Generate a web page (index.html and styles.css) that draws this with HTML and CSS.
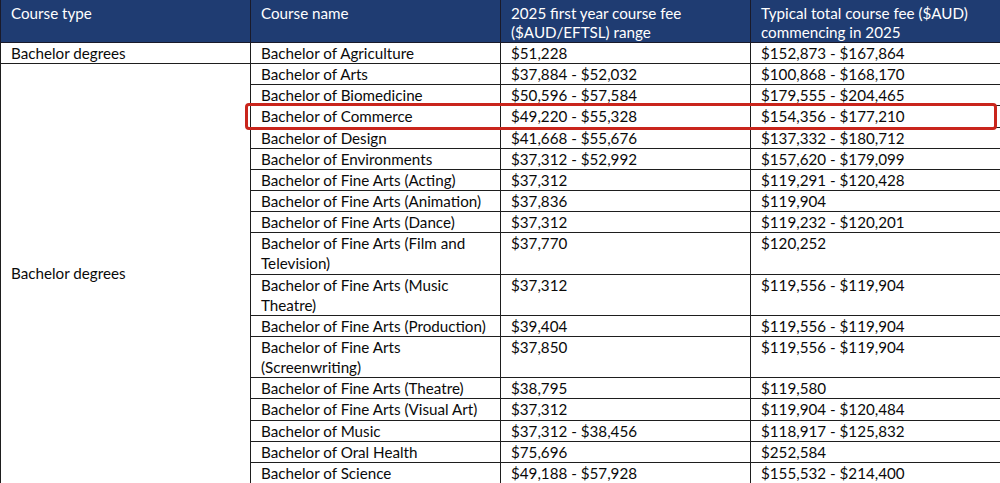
FILE: index.html
```html
<!DOCTYPE html>
<html lang="en">
<head>
<meta charset="utf-8">
<title>Course fees</title>
<link rel="stylesheet" href="styles.css">
</head>
<body>
<div class="wrap">
  <table class="fees">
    <colgroup>
      <col class="c"><col class="c"><col class="c"><col class="c">
    </colgroup>
    <thead>
      <tr>
        <th>Course type</th>
        <th>Course name</th>
        <th>2025 first year course fee<br>($AUD/EFTSL) range</th>
        <th>Typical total course fee ($AUD)<br>commencing in 2025</th>
      </tr>
    </thead>
    <tbody>
      <tr><td>Bachelor degrees</td><td>Bachelor of Agriculture</td><td>$51,228</td><td>$152,873 - $167,864</td></tr>
      <tr><td class="type" rowspan="17">Bachelor degrees</td><td>Bachelor of Arts</td><td>$37,884 - $52,032</td><td>$100,868 - $168,170</td></tr>
      <tr><td>Bachelor of Biomedicine</td><td>$50,596 - $57,584</td><td>$179,555 - $204,465</td></tr>
      <tr><td>Bachelor of Commerce</td><td>$49,220 - $55,328</td><td>$154,356 - $177,210</td></tr>
      <tr><td>Bachelor of Design</td><td>$41,668 - $55,676</td><td>$137,332 - $180,712</td></tr>
      <tr><td>Bachelor of Environments</td><td>$37,312 - $52,992</td><td>$157,620 - $179,099</td></tr>
      <tr><td>Bachelor of Fine Arts (Acting)</td><td>$37,312</td><td>$119,291 - $120,428</td></tr>
      <tr><td>Bachelor of Fine Arts (Animation)</td><td>$37,836</td><td>$119,904</td></tr>
      <tr><td>Bachelor of Fine Arts (Dance)</td><td>$37,312</td><td>$119,232 - $120,201</td></tr>
      <tr><td>Bachelor of Fine Arts (Film and<br>Television)</td><td>$37,770</td><td>$120,252</td></tr>
      <tr><td>Bachelor of Fine Arts (Music<br>Theatre)</td><td>$37,312</td><td>$119,556 - $119,904</td></tr>
      <tr><td>Bachelor of Fine Arts (Production)</td><td>$39,404</td><td>$119,556 - $119,904</td></tr>
      <tr><td>Bachelor of Fine Arts<br>(Screenwriting)</td><td>$37,850</td><td>$119,556 - $119,904</td></tr>
      <tr><td>Bachelor of Fine Arts (Theatre)</td><td>$38,795</td><td>$119,580</td></tr>
      <tr><td>Bachelor of Fine Arts (Visual Art)</td><td>$37,312</td><td>$119,904 - $120,484</td></tr>
      <tr><td>Bachelor of Music</td><td>$37,312 - $38,456</td><td>$118,917 - $125,832</td></tr>
      <tr><td>Bachelor of Oral Health</td><td>$75,696</td><td>$252,584</td></tr>
      <tr><td>Bachelor of Science</td><td>$49,188 - $57,928</td><td>$155,532 - $214,400</td></tr>
    </tbody>
  </table>
  <div class="highlight"></div>
</div>
</body>
</html>
```

FILE: styles.css
```css
html, body {
  margin: 0;
  padding: 0;
  background: #ffffff;
  overflow: hidden;
}

.wrap {
  position: relative;
  width: 1010px;
}

.fees {
  border-collapse: collapse;
  table-layout: fixed;
  width: 1001px;
  font-family: Lato, "Open Sans", sans-serif;
  font-size: 15.2px;
  color: #0a0a0a;
}

.fees .c {
  width: 250px;
}

.fees th {
  background: #1f3c72;
  color: #ffffff;
  font-weight: normal;
  text-align: left;
  vertical-align: top;
  line-height: 19px;
  height: 38px;
  padding: 4px 10px 0 10px;
  border: 1px solid #1a1a2a;
  border-top: none;
}

.fees td {
  line-height: 20.14px;
  padding: 0 10px;
  border: 1px solid #1e1e1e;
  vertical-align: top;
}

.fees td.type {
  vertical-align: middle;
}

.highlight {
  position: absolute;
  left: 245px;
  top: 103px;
  width: 746px;
  height: 21px;
  border: 3px solid #c9251c;
  border-radius: 4px;
}
```
